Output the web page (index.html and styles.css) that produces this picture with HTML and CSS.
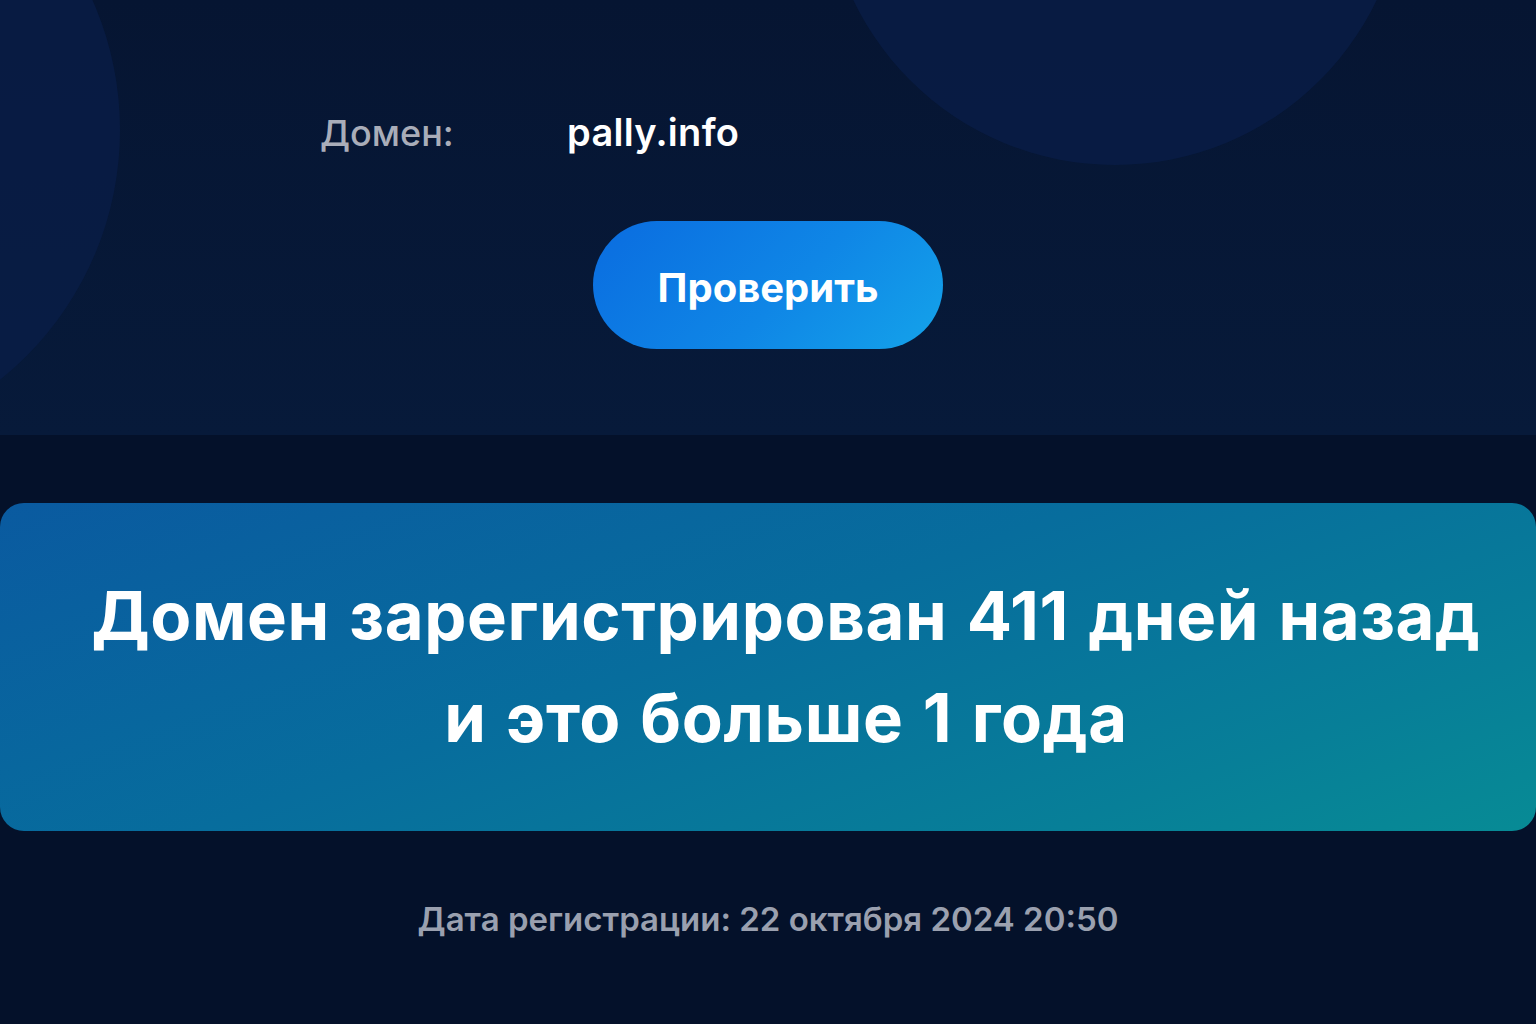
FILE: index.html
```html
<!DOCTYPE html>
<html lang="ru">
<head>
<meta charset="utf-8">
<title>Проверка домена</title>
<link rel="stylesheet" href="styles.css">
</head>
<body>
<div class="page">
  <section class="top">
    <div class="blob blob-left"></div>
    <div class="blob blob-right"></div>
    <div class="domain-row">
      <span class="label">Домен:</span>
      <span class="value">pally.info</span>
    </div>
    <button class="check-btn">Проверить</button>
  </section>
  <section class="bottom">
    <div class="result-card">
      <p class="result-text">Домен зарегистрирован 411 дней назад<br>и это больше 1 года</p>
    </div>
    <p class="reg-date">Дата регистрации: 22 октября 2024 20:50</p>
  </section>
</div>
</body>
</html>
```
FILE: styles.css
```css
* { box-sizing: border-box; }
html, body { margin: 0; padding: 0; }
body {
  width: 1536px;
  height: 1024px;
  overflow: hidden;
  background: #05112a;
  font-family: Inter, "Noto Sans", sans-serif;
}
.page { display: flex; flex-direction: column; height: 1024px; }
.top {
  position: relative;
  overflow: hidden;
  height: 435px;
  background: linear-gradient(180deg, #061532 0%, #071a3a 100%);
  display: flex;
  flex-direction: column;
  align-items: center;
}
.blob {
  position: absolute;
  border-radius: 50%;
  background: #0a1e48;
  opacity: 0.75;
}
.blob-left { width: 640px; height: 640px; left: -520px; top: -190px; }
.blob-right { width: 580px; height: 580px; left: 825px; top: -415px; }
.domain-row {
  position: relative;
  align-self: flex-start;
  margin-left: 320px;
  margin-top: 109px;
  display: flex;
  align-items: baseline;
}
.label {
  width: 247px;
  font-size: 36px;
  font-weight: 500;
  color: #a9adb9;
}
.value {
  font-size: 38px;
  font-weight: 600;
  color: #ffffff;
  letter-spacing: 0.3px;
}
.check-btn {
  position: relative;
  margin-top: 66px;
  width: 350px;
  height: 128px;
  border: none;
  border-radius: 64px;
  background: linear-gradient(135deg, #0a6ce0 0%, #0f86e6 55%, #14a3ea 100%);
  color: #ffffff;
  font-family: Inter, "Noto Sans", sans-serif;
  font-size: 40px;
  font-weight: 700;
  padding: 4px 0 0;
}
.bottom {
  flex: 1;
  display: flex;
  flex-direction: column;
  align-items: center;
  padding-top: 68px;
  background: #04112a;
}
.result-card {
  width: 1536px;
  height: 328px;
  border-radius: 24px;
  background: linear-gradient(160deg, #0a5aa0 0%, #076d9d 45%, #077f98 80%, #078b95 100%);
  display: flex;
  align-items: center;
  justify-content: center;
}
.result-text {
  margin: 0;
  padding-left: 36px;
  text-align: center;
  color: #ffffff;
  font-size: 67px;
  font-weight: 700;
  letter-spacing: 0.6px;
  word-spacing: 3px;
  line-height: 102px;
}
.reg-date {
  margin: 68px 0 0;
  font-size: 33px;
  font-weight: 600;
  color: #9aa0af;
}
```
